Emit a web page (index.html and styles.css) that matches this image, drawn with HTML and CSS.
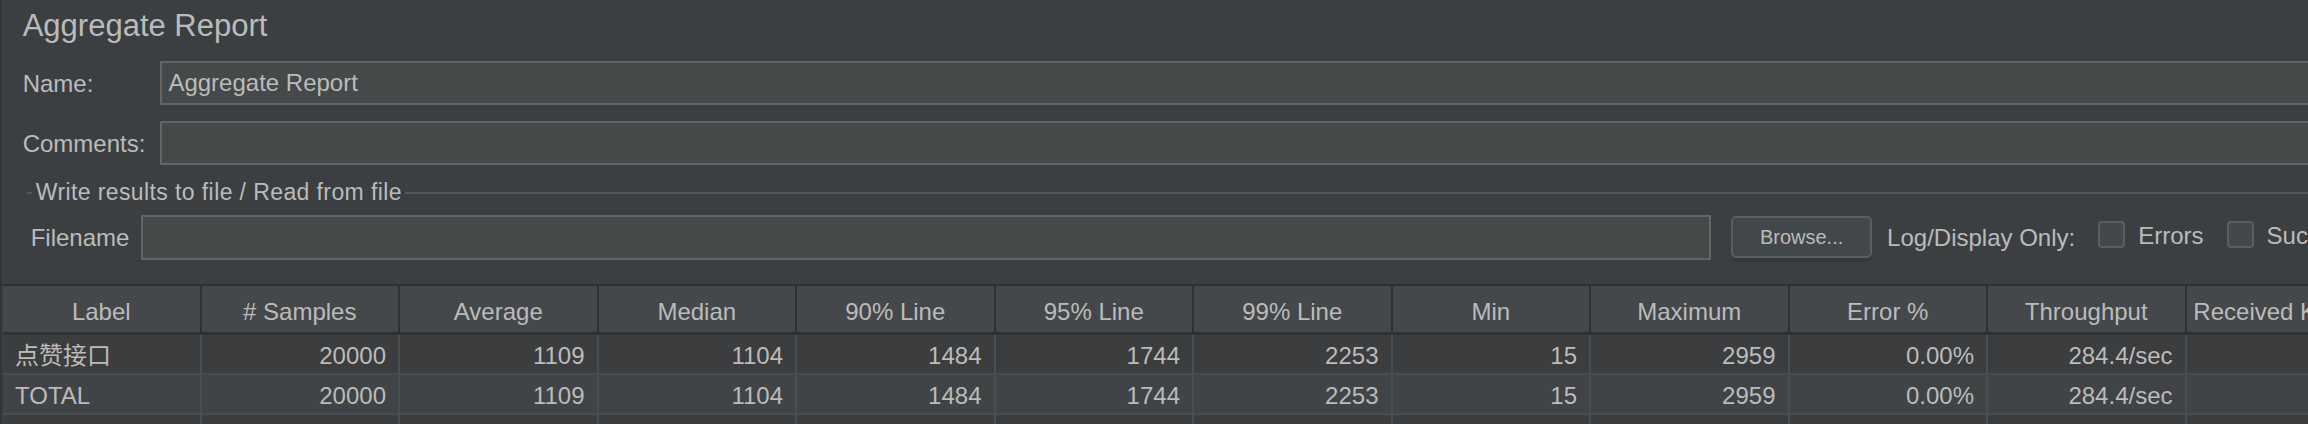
FILE: index.html
```html
<html>
    <head>
        <link rel="stylesheet" href="styles.css">
    </head>
    <body>
        <div class="frame">
            <div class="form">
                <h1 class="title">Aggregate Report</h1>
                <div class="fields">
                    <label>Name:</label>
                    <div class="field">Aggregate Report</div>
                    <label>Comments:</label>
                    <div class="field"></div>
                </div>
                <fieldset class="group">
                    <legend>Write results to file / Read from file</legend>
                    <div class="file-row">
                        <label>Filename</label>
                        <div class="field file-field"></div>
                        <div class="btn">Browse...</div>
                        <span class="log-label">Log/Display Only:</span>
                        <span class="check"></span>
                        <span class="check-label">Errors</span>
                        <span class="check"></span>
                        <span class="check-label">Successes</span>
                        <div class="btn">Configure</div>
                    </div>
                </fieldset>
            </div>
            <div class="results">
                <table>
                    <thead>
                        <tr>
                            <th>Label</th>
                            <th># Samples</th>
                            <th>Average</th>
                            <th>Median</th>
                            <th>90% Line</th>
                            <th>95% Line</th>
                            <th>99% Line</th>
                            <th>Min</th>
                            <th>Maximum</th>
                            <th>Error %</th>
                            <th>Throughput</th>
                            <th>Received KB/sec</th>
                            <th>Sent KB/sec</th>
                        </tr>
                    </thead>
                    <tbody>
                        <tr>
                            <td class="name">点赞接口</td>
                            <td>20000</td>
                            <td>1109</td>
                            <td>1104</td>
                            <td>1484</td>
                            <td>1744</td>
                            <td>2253</td>
                            <td>15</td>
                            <td>2959</td>
                            <td>0.00%</td>
                            <td>284.4/sec</td>
                            <td>57.53</td>
                            <td>0.00</td>
                        </tr>
                        <tr>
                            <td class="name">TOTAL</td>
                            <td>20000</td>
                            <td>1109</td>
                            <td>1104</td>
                            <td>1484</td>
                            <td>1744</td>
                            <td>2253</td>
                            <td>15</td>
                            <td>2959</td>
                            <td>0.00%</td>
                            <td>284.4/sec</td>
                            <td>57.53</td>
                            <td>0.00</td>
                        </tr>
                        <tr class="blank">
                            <td></td><td></td><td></td><td></td><td></td><td></td><td></td>
                            <td></td><td></td><td></td><td></td><td></td><td></td>
                        </tr>
                    </tbody>
                </table>
            </div>
        </div>
    </body>
</html>
```

FILE: styles.css
```css
*{
    font-family: "Liberation Sans", "Noto Sans CJK SC", sans-serif;
    box-sizing: border-box;
}
html, body{
    margin: 0;
    width: 2308px;
    height: 424px;
    overflow: hidden;
    background: #3c3f41;
    color: #bbbbbb;
}
.frame{
    width: 2700px;
    height: 424px;
    border-left: 2px solid #333537;
}
.form{
    padding-left: 20.7px;
}
.title{
    margin: 0;
    padding-top: 8px;
    font-size: 31px;
    font-weight: normal;
    line-height: 36px;
}
.fields{
    display: grid;
    grid-template-columns: auto 1fr;
    grid-auto-rows: 44px;
    column-gap: 15px;
    row-gap: 16px;
    align-items: center;
    margin-top: 17px;
}
label, .log-label, .check-label{
    font-size: 24px;
    line-height: 27px;
}
.field{
    height: 44px;
    border: 2px solid #646464;
    background: #45494a;
    font-size: 24px;
    line-height: 40px;
    padding-left: 6px;
}
.group{
    margin: 14px 0 0 4px;
    padding: 8.5px 0 0 4px;
    border: 0;
    border-top: 2px solid #555759;
    min-width: 0;
}
.group legend{
    margin-left: 1px;
    padding: 0 3px 0 4px;
    font-size: 23px;
    line-height: 27px;
    letter-spacing: 0.4px;
}
.file-row{
    display: flex;
    align-items: center;
    height: 45px;
}
.file-field{
    width: 1570px;
    height: 45px;
    margin-left: 12px;
}
.btn{
    margin-left: 19.7px;
    width: 141px;
    height: 42px;
    border: 2px solid #5b5f60;
    border-radius: 5px;
    background: #42474a;
    box-shadow: 0 4px 0 #36383a;
    font-size: 20px;
    line-height: 38px;
    text-align: center;
}
.log-label{
    margin-left: 15px;
}
.check{
    width: 27px;
    height: 27px;
    margin: 0 0 5px 23px;
    border: 2px solid #5b5e5f;
    border-radius: 4px;
    background: #43494b;
}
.check-label{
    margin: 0 0 4px 13px;
}
.results{
    margin: 24px 0 0 1px;
}
.results table{
    table-layout: fixed;
    width: 2580.5px;
    border-spacing: 0;
}
.results th{
    padding: 6px 0 0 0;
    line-height: 40px;
    font-size: 24px;
    font-weight: normal;
    background: #45484a;
    border-top: 2px solid #2e3032;
    border-bottom: 3px solid #2e3032;
    border-right: 2px solid #2e3032;
    white-space: nowrap;
    overflow: hidden;
}
.results td{
    padding: 4px 12px 0 0;
    line-height: 34px;
    font-size: 24px;
    text-align: right;
    background: #3b3d3f;
    border-right: 2px solid #4b4e50;
    border-bottom: 2px solid #4b4e50;
    white-space: nowrap;
}
.results tbody tr:nth-child(2) td{
    background: #414446;
}
.results td.name{
    text-align: left;
    padding-left: 12px;
}
.results tr.blank td{
    height: 40px;
}
```
